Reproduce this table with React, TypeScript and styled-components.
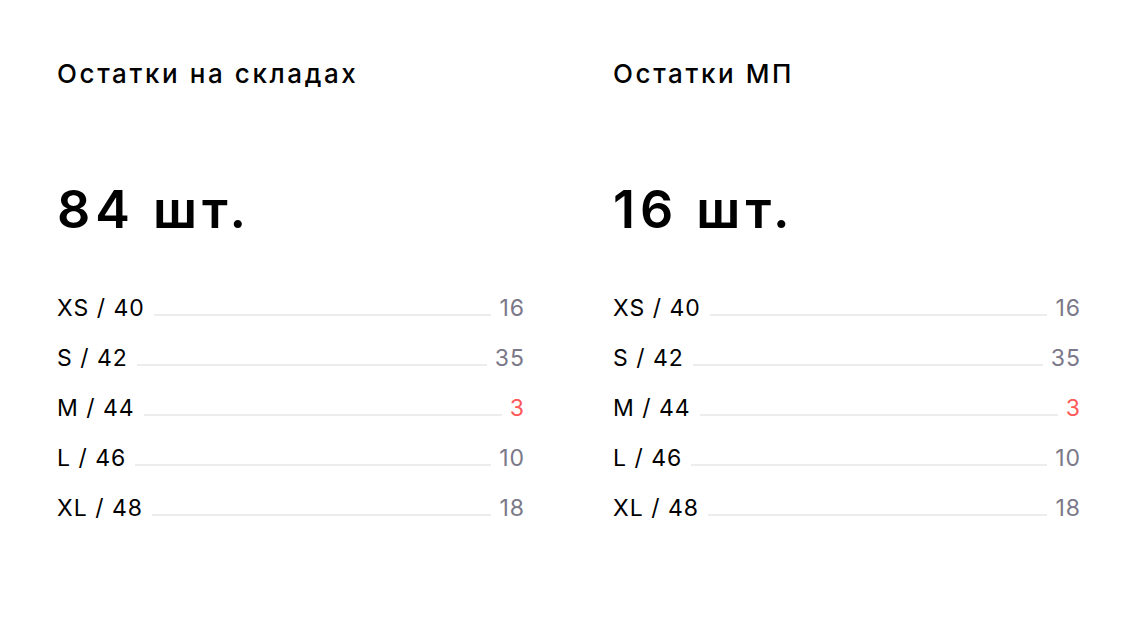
import React from "react";
import styled, { createGlobalStyle } from "styled-components";

const GlobalStyle = createGlobalStyle`
  html, body {
    margin: 0;
    padding: 0;
    background: #ffffff;
  }
  body {
    font-family: Inter, "Noto Sans", "Liberation Sans", sans-serif;
    color: #000000;
    -webkit-font-smoothing: antialiased;
  }
`;

const Page = styled.div`
  width: 1137px;
  height: 624px;
  box-sizing: border-box;
  padding: 58px 57px 0;
  display: grid;
  grid-template-columns: 1fr 1fr;
  column-gap: 89px;
  background: #ffffff;
`;

const Column = styled.section`
  display: flex;
  flex-direction: column;
  min-width: 0;
`;

const Title = styled.h2`
  margin: 0;
  font-size: 26px;
  line-height: 32px;
  font-weight: 500;
  letter-spacing: 2.6px;
  color: #000;
`;

const Total = styled.div`
  margin-top: 92px;
  font-size: 52px;
  line-height: 56px;
  font-weight: 600;
  letter-spacing: 5px;
  color: #000;
`;

const List = styled.ul`
  list-style: none;
  margin: 56px 0 0;
  padding: 0;
  display: flex;
  flex-direction: column;
  gap: 22px;
`;

const Row = styled.li`
  display: flex;
  align-items: flex-end;
  font-size: 23px;
  line-height: 28px;
  font-weight: 400;
  letter-spacing: 1px;
`;

const Label = styled.span`
  flex: none;
  color: #000;
`;

const Leader = styled.span`
  flex: 1;
  height: 2px;
  margin: 0 8px 6px 9px;
  background: #ededf0;
`;

const Count = styled.span<{ $low?: boolean }>`
  flex: none;
  margin-right: -1px;
  color: ${(p) => (p.$low ? "#ff5a5a" : "#7a7889")};
`;

type Item = { size: string; count: number };

const items: Item[] = [
  { size: "XS / 40", count: 16 },
  { size: "S / 42", count: 35 },
  { size: "M / 44", count: 3 },
  { size: "L / 46", count: 10 },
  { size: "XL / 48", count: 18 },
];

const Stock: React.FC<{ title: string; total: number; rows: Item[] }> = ({
  title,
  total,
  rows,
}) => (
  <Column>
    <Title>{title}</Title>
    <Total>{total} шт.</Total>
    <List>
      {rows.map((r) => (
        <Row key={r.size}>
          <Label>{r.size}</Label>
          <Leader />
          <Count $low={r.count < 5}>{r.count}</Count>
        </Row>
      ))}
    </List>
  </Column>
);

export default function App() {
  return (
    <>
      <GlobalStyle />
      <Page>
        <Stock title="Остатки на складах" total={84} rows={items} />
        <Stock title="Остатки МП" total={16} rows={items} />
      </Page>
    </>
  );
}
